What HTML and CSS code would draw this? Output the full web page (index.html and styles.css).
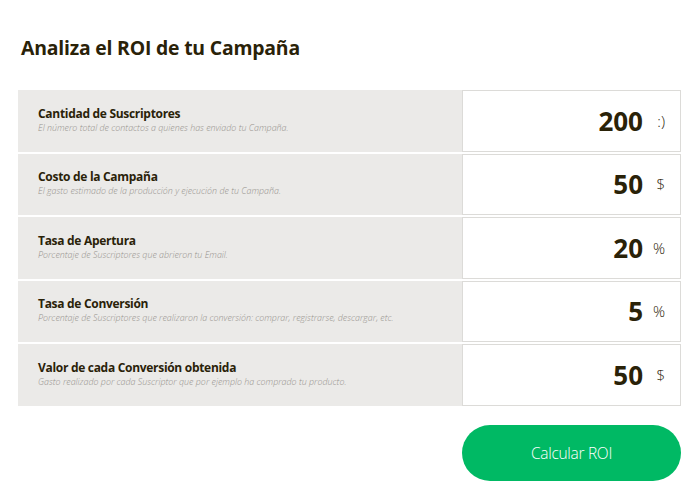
FILE: index.html
```html
<!DOCTYPE html>
<html lang="es">
<head>
<meta charset="utf-8">
<title>Analiza el ROI de tu Campaña</title>
<link rel="stylesheet" href="styles.css">
</head>
<body>
<main class="page">
  <h1 class="title">Analiza el ROI de tu Campaña</h1>
  <section class="rows">
    <div class="row">
      <div class="label">
        <div class="label-title">Cantidad de Suscriptores</div>
        <div class="label-sub">El número total de contactos a quienes has enviado tu Campaña.</div>
      </div>
      <div class="field"><span class="value">200</span><span class="unit">:)</span></div>
    </div>
    <div class="row">
      <div class="label">
        <div class="label-title">Costo de la Campaña</div>
        <div class="label-sub">El gasto estimado de la producción y ejecución de tu Campaña.</div>
      </div>
      <div class="field"><span class="value">50</span><span class="unit">$</span></div>
    </div>
    <div class="row">
      <div class="label">
        <div class="label-title">Tasa de Apertura</div>
        <div class="label-sub">Porcentaje de Suscriptores que abrieron tu Email.</div>
      </div>
      <div class="field"><span class="value">20</span><span class="unit">%</span></div>
    </div>
    <div class="row">
      <div class="label">
        <div class="label-title">Tasa de Conversión</div>
        <div class="label-sub">Porcentaje de Suscriptores que realizaron la conversión: comprar, registrarse, descargar, etc.</div>
      </div>
      <div class="field"><span class="value">5</span><span class="unit">%</span></div>
    </div>
    <div class="row">
      <div class="label">
        <div class="label-title">Valor de cada Conversión obtenida</div>
        <div class="label-sub">Gasto realizado por cada Suscriptor que por ejemplo ha comprado tu producto.</div>
      </div>
      <div class="field"><span class="value">50</span><span class="unit">$</span></div>
    </div>
  </section>
  <div class="actions">
    <button class="btn" type="button">Calcular ROI</button>
  </div>
</main>
</body>
</html>
```
FILE: styles.css
```css
* { box-sizing: border-box; }
html, body { margin: 0; padding: 0; background: #ffffff; }
body {
  font-family: "Open Sans", "Noto Sans", sans-serif;
  color: #2a2208;
  width: 700px;
  height: 500px;
  overflow: hidden;
}
.page { padding: 36px 19px 0 18px; }
.title {
  margin: 0 0 30px 3px;
  font-size: 19.4px;
  font-weight: 700;
  line-height: 24px;
  letter-spacing: -0.2px;
  color: #2a2208;
}
.rows { display: flex; flex-direction: column; gap: 2px; }
.row {
  display: flex;
  height: 61.5px;
  background: #ebeae8;
}
.label {
  flex: 1;
  display: flex;
  flex-direction: column;
  justify-content: center;
  padding-left: 20px;
  padding-bottom: 2px;
}
.label-title {
  font-size: 12px;
  font-weight: 700;
  line-height: 16px;
  letter-spacing: -0.3px;
  color: #2a2208;
}
.label-sub {
  font-size: 8.9px;
  font-style: italic;
  font-weight: 300;
  line-height: 12px;
  color: #96928d;
}
.field {
  width: 219px;
  background: #ffffff;
  border: 1px solid #dcdbd8;
  display: flex;
  align-items: center;
  justify-content: flex-end;
  padding: 0 15px 0 0;
}
.value {
  font-size: 26px;
  font-weight: 700;
  color: #2a2208;
  line-height: 30px;
}
.unit {
  width: 22px;
  text-align: right;
  font-size: 15px;
  font-weight: 300;
  color: #2a2208;
}
.actions { display: flex; justify-content: flex-end; margin-top: 19px; }
.btn {
  width: 219px;
  height: 56px;
  border: none;
  border-radius: 28px;
  background: #00b964;
  color: #ffffff;
  font-family: "Open Sans", "Noto Sans", sans-serif;
  font-size: 15.5px;
  font-weight: 300;
  letter-spacing: -0.3px;
  cursor: pointer;
}
```
